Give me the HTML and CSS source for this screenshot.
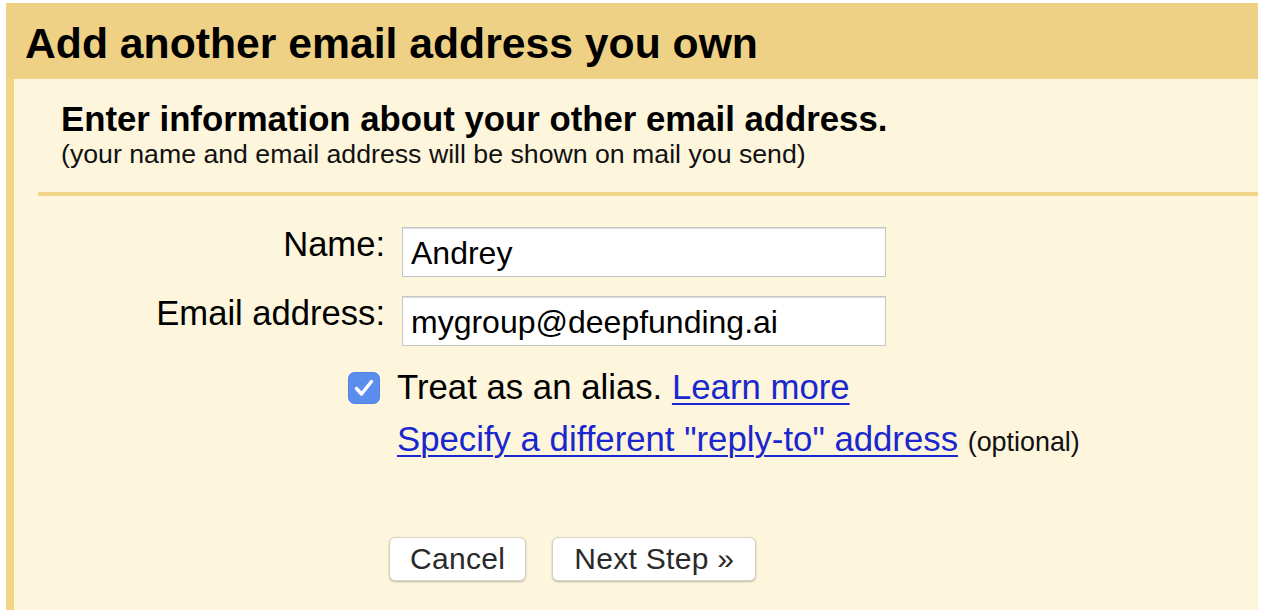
FILE: index.html
```html
<!DOCTYPE html>
<html lang="en">
<head>
<meta charset="utf-8">
<title>Add another email address you own</title>
<link rel="stylesheet" href="styles.css">
</head>
<body>
<div class="panel">
  <div class="header">Add another email address you own</div>
  <div class="content">
    <div class="intro">
      <div class="intro-title">Enter information about your other email address.</div>
      <div class="intro-note">(your name and email address will be shown on mail you send)</div>
    </div>
    <div class="rule"></div>
    <div class="form">
      <label class="label" for="name">Name:</label>
      <input class="field" id="name" type="text" value="Andrey">
      <label class="label" for="email">Email address:</label>
      <input class="field" id="email" type="text" value="mygroup@deepfunding.ai">
    </div>
    <div class="options">
      <div class="check-row">
        <span class="checkbox">
          <svg width="32" height="32" viewBox="0 0 32 32"><rect x="0.5" y="0.5" width="31" height="31" rx="6" fill="#5b8def" stroke="#4f82e3"/><path d="M8.5 16.5 L13.5 22 L23.5 9.5" fill="none" stroke="#fff" stroke-width="3.4" stroke-linecap="round" stroke-linejoin="round"/></svg>
        </span>
        <span class="check-text">Treat as an alias. <a href="#" class="link">Learn more</a></span>
      </div>
      <div class="reply-row"><a href="#" class="link">Specify a different "reply-to" address</a> <span class="optional">(optional)</span></div>
    </div>
    <div class="buttons">
      <button class="btn" type="button">Cancel</button>
      <button class="btn btn-next" type="button">Next Step »</button>
    </div>
  </div>
</div>
</body>
</html>
```

FILE: styles.css
```css
html, body {
  margin: 0;
  padding: 0;
  background: #ffffff;
}
body {
  font-family: "Liberation Sans", Arial, Helvetica, sans-serif;
  color: #000;
  overflow: hidden;
}
.panel {
  margin: 3px 8px 0 6px;
  height: 607px;
  display: flex;
  flex-direction: column;
}
.header {
  background: #eed185;
  height: 76px;
  box-sizing: border-box;
  padding: 16px 0 0 19px;
  font-size: 42.7px;
  font-weight: bold;
  line-height: 48px;
  white-space: nowrap;
}
.content {
  flex: 1;
  background: #fdf5dc;
  border-left: 8px solid #f2d586;
}
.intro {
  padding: 20px 0 0 47px;
}
.intro-title {
  font-size: 34.75px;
  font-weight: bold;
  line-height: 40px;
  white-space: nowrap;
}
.intro-note {
  font-size: 26.7px;
  line-height: 30px;
  color: #111;
  white-space: nowrap;
}
.rule {
  margin: 23px 0 0 24px;
  height: 4px;
  background: #f1d487;
}
.form {
  margin-top: 31px;
  display: grid;
  grid-template-columns: 371px 484px;
  column-gap: 17px;
  row-gap: 19px;
}
.label {
  text-align: right;
  font-size: 34.6px;
  line-height: 34px;
  white-space: nowrap;
}
.field {
  width: 484px;
  height: 50px;
  box-sizing: border-box;
  border: 1px solid #c6c6c6;
  box-shadow: inset 0 1px 1px #dddddd;
  background: #fff;
  padding: 2px 8px 0 8px;
  margin: 0;
  font-family: "Liberation Sans", Arial, Helvetica, sans-serif;
  font-size: 32px;
  color: #000;
  outline: none;
}
.options {
  margin-top: 24px;
  padding-left: 334px;
}
.check-row {
  display: flex;
  align-items: center;
  gap: 17px;
  height: 34px;
}
.checkbox {
  width: 32px;
  height: 32px;
  display: block;
  margin-top: 2px;
}
.checkbox svg {
  display: block;
}
.check-text {
  font-size: 34.75px;
  line-height: 34px;
  white-space: nowrap;
}
.link {
  color: #1a27cf;
  text-decoration: underline;
  text-decoration-thickness: 2px;
  text-underline-offset: 4px;
}
.reply-row {
  margin-top: 18px;
  padding-left: 49px;
  font-size: 34.75px;
  line-height: 34px;
  white-space: nowrap;
}
.optional {
  font-size: 26.9px;
  color: #111;
}
.buttons {
  margin-top: 78px;
  padding-left: 375px;
  display: flex;
  gap: 26px;
}
.btn {
  height: 44px;
  box-sizing: border-box;
  padding: 0 20px 1px 20px;
  background: #ffffff;
  border: 1px solid #d6d2c6;
  border-radius: 6px;
  box-shadow: 0 1px 2px rgba(0, 0, 0, 0.25);
  font-family: "Liberation Sans", Arial, Helvetica, sans-serif;
  font-size: 30px;
  color: #2a2a2a;
  letter-spacing: 0.3px;
}
.btn-next {
  padding: 0 21px 1px 21px;
}
```
